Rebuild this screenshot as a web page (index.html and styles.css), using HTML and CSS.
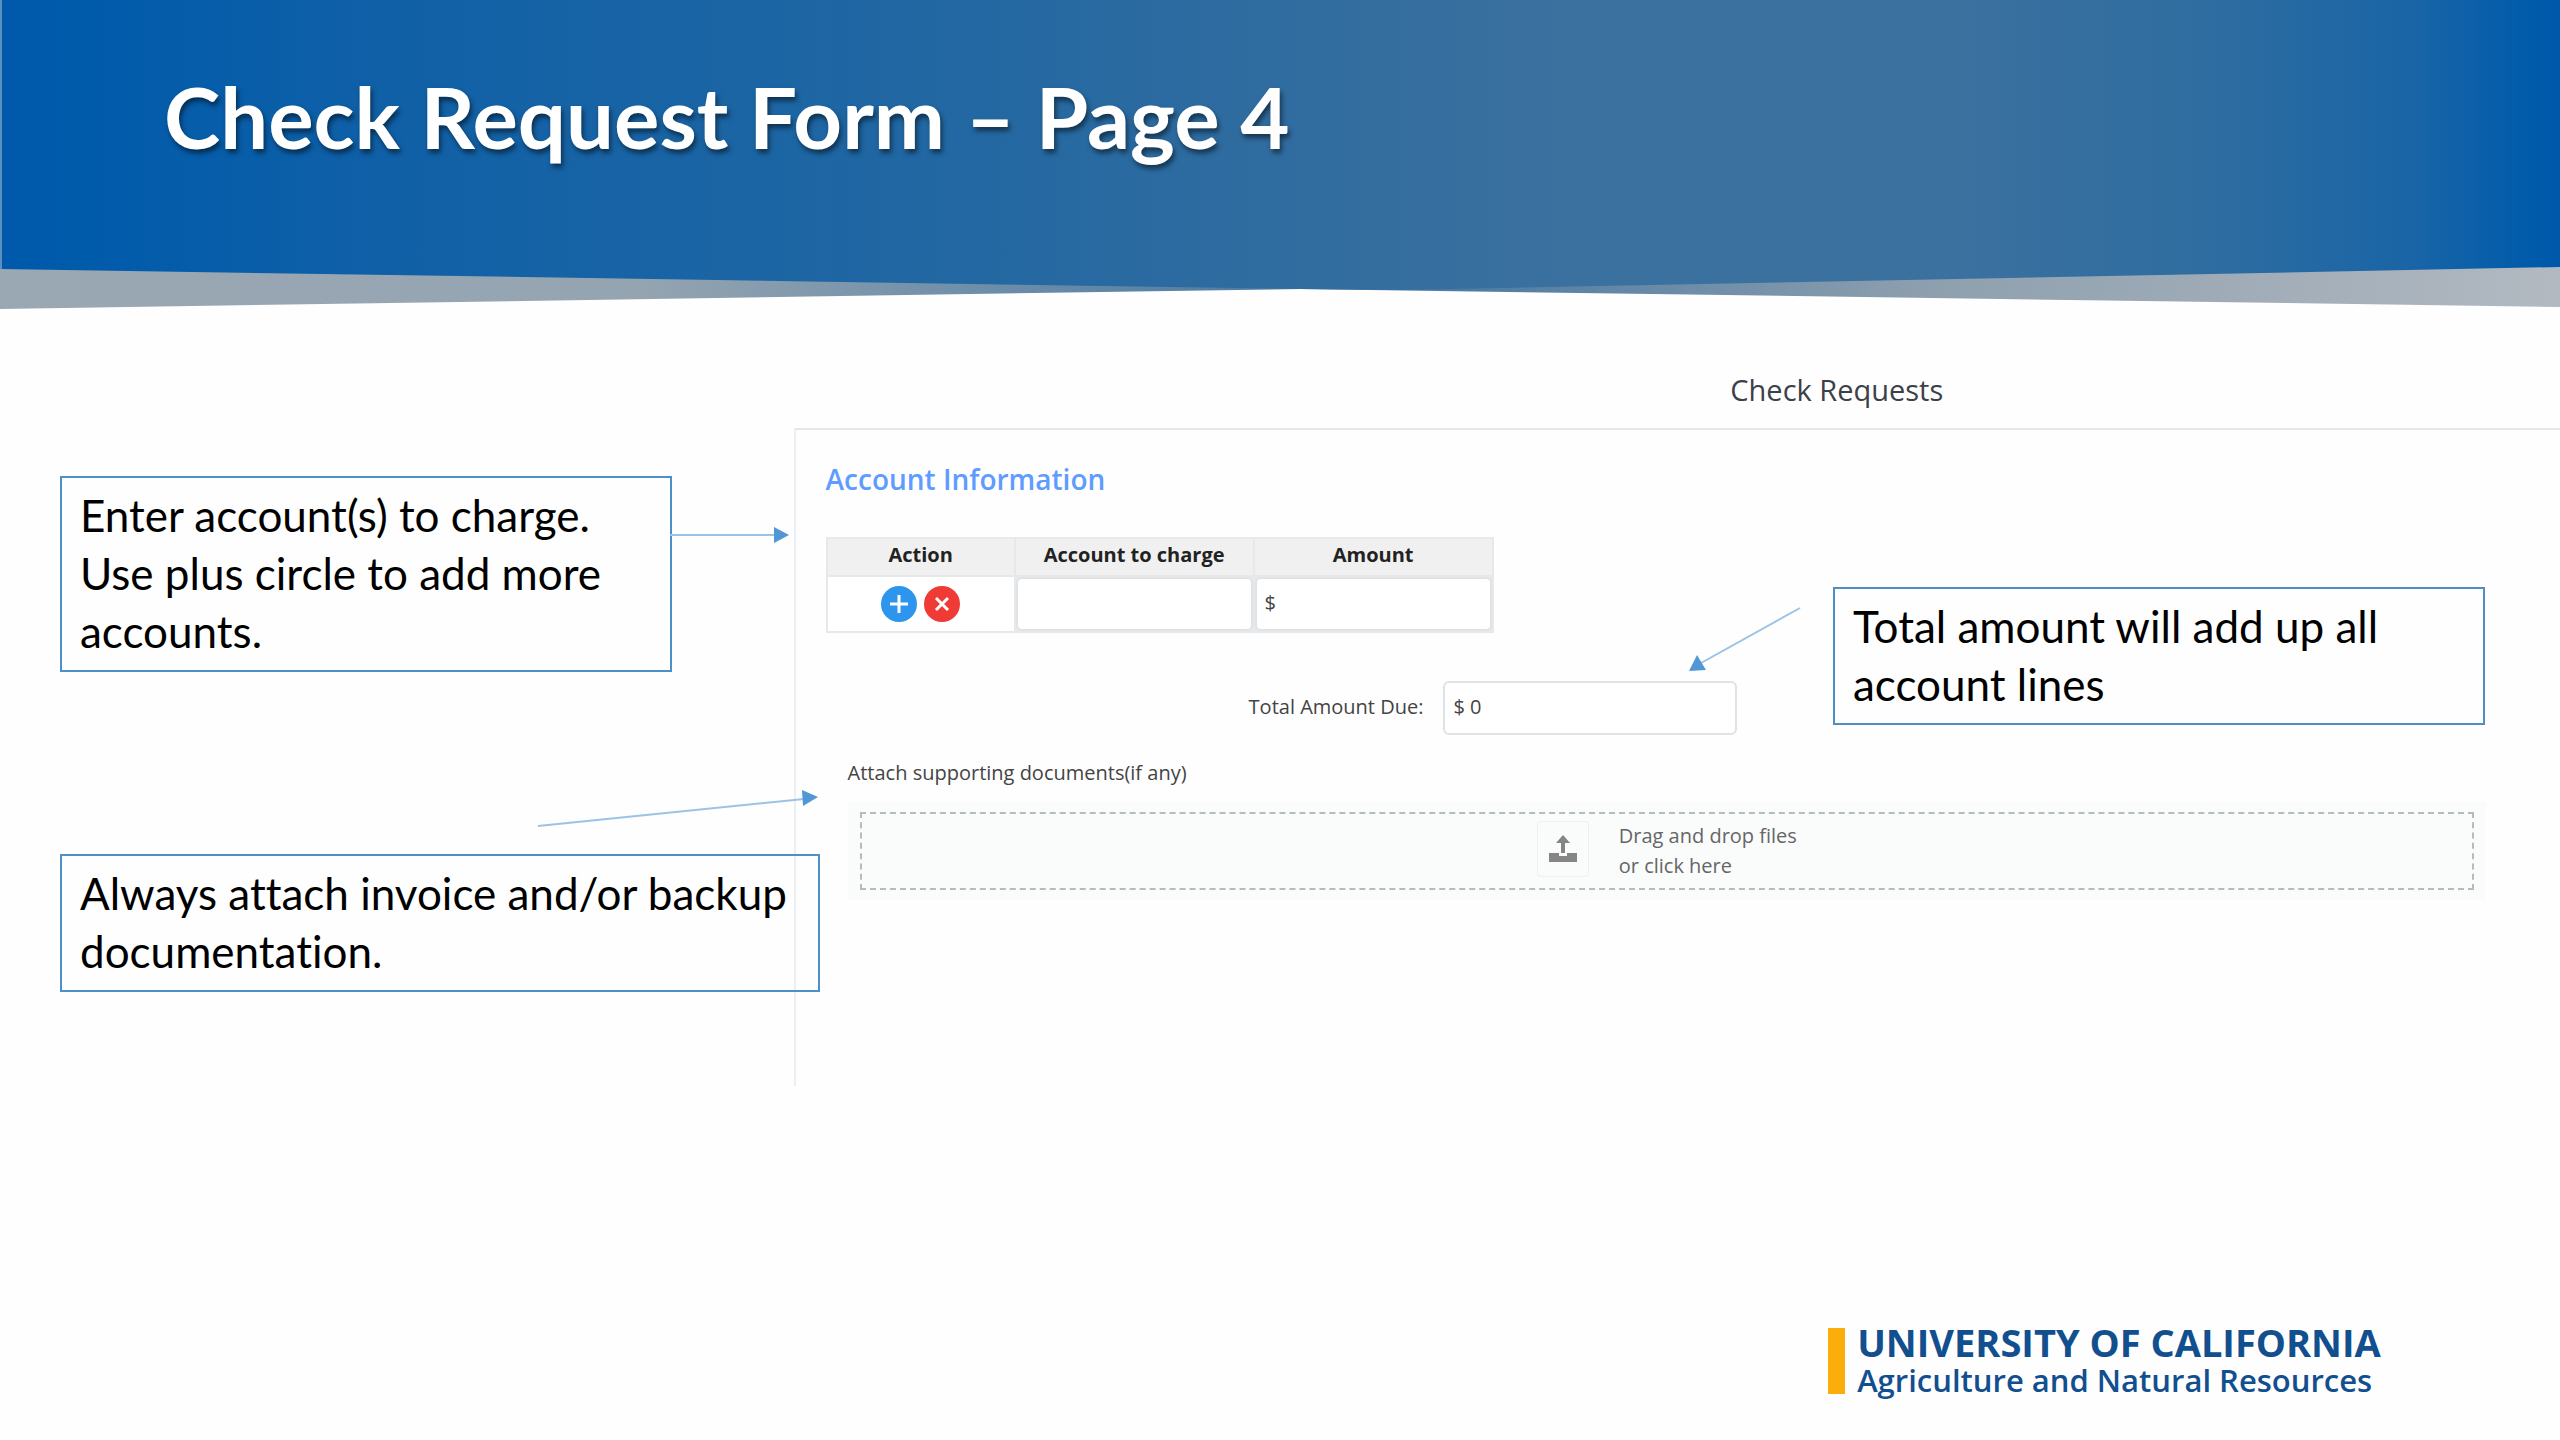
FILE: index.html
```
<!DOCTYPE html>
<html lang="en">
<head>
    <meta charset="UTF-8">
    <meta name="viewport" content="width=device-width, initial-scale=1.0">
    <title>Check Request Form – Page 4</title>
    <link rel="stylesheet" href="styles.css">
</head>
<body>
    <header class="banner">
        <svg class="banner-bg" viewBox="0 0 2560 310" preserveAspectRatio="none" aria-hidden="true">
            <defs>
                <linearGradient id="blue">
                    <stop offset="0" stop-color="#0059ab"/>
                    <stop offset="0.03" stop-color="#005bab"/>
                    <stop offset="0.15" stop-color="#1060a7"/>
                    <stop offset="0.35" stop-color="#2067a3"/>
                    <stop offset="0.52" stop-color="#326d9f"/>
                    <stop offset="0.62" stop-color="#3b719f"/>
                    <stop offset="0.76" stop-color="#3b719f"/>
                    <stop offset="0.86" stop-color="#2f6da0"/>
                    <stop offset="0.94" stop-color="#1a65a6"/>
                    <stop offset="0.99" stop-color="#005bab"/>
                    <stop offset="1" stop-color="#0058aa"/>
                </linearGradient>
                <linearGradient id="grey">
                    <stop offset="0" stop-color="#9aa8b3"/>
                    <stop offset="0.25" stop-color="#94a4b1"/>
                    <stop offset="0.5" stop-color="#4d7ba2"/>
                    <stop offset="0.57" stop-color="#4d7ba2"/>
                    <stop offset="0.75" stop-color="#8d9fae"/>
                    <stop offset="1" stop-color="#b2b9c1"/>
                </linearGradient>
            </defs>
            <path fill="url(#grey)" d="M0 260H2560V307L1300 289L0 309Z"/>
            <path fill="url(#blue)" d="M0 0H2560V267L1400 290L1300 289L0 269Z"/>
            <path fill="#5b8fc0" d="M0 0H2V269H0Z"/>
        </svg>
        <h1>Check Request Form – Page 4</h1>
    </header>

    <main class="slide">
        <aside class="notes">
            <div class="callout callout-accounts">
                Enter account(s) to charge.<br>Use plus circle to add more accounts.
                <svg class="arrow arrow-accounts" width="120" height="20" viewBox="0 0 120 20" aria-hidden="true">
                    <path class="line" d="M0 10H106"/>
                    <path class="head" d="M104 2L119 10L104 18Z"/>
                </svg>
            </div>
            <div class="callout callout-attach">
                Always attach invoice and/or backup documentation.
                <svg class="arrow arrow-attach" width="284" height="46" viewBox="0 0 284 46" aria-hidden="true">
                    <path class="line" d="M2 38L268 11"/>
                    <path class="head" d="M266 2L282 9L267 18Z"/>
                </svg>
            </div>
        </aside>

        <section class="request">
            <h2>Check Requests</h2>
            <form class="panel">
                <h3>Account Information</h3>
                <table class="accounts">
                    <thead>
                        <tr>
                            <th class="col-action">Action</th>
                            <th>Account to charge</th>
                            <th>Amount</th>
                        </tr>
                    </thead>
                    <tbody>
                        <tr>
                            <td class="actions">
                                <button type="button" class="add" aria-label="Add account">
                                    <svg viewBox="0 0 36 36"><path d="M18 9V27M9 18H27"/></svg>
                                </button>
                                <button type="button" class="remove" aria-label="Remove account">
                                    <svg viewBox="0 0 36 36"><path d="M12 12L24 24M24 12L12 24"/></svg>
                                </button>
                            </td>
                            <td><input type="text" aria-label="Account to charge"></td>
                            <td><input type="text" aria-label="Amount" value="$"></td>
                        </tr>
                    </tbody>
                </table>

                <div class="total">
                    <label for="total">Total Amount Due:</label>
                    <input type="text" id="total" value="$ 0">
                </div>

                <div class="attach">
                    <label for="files">Attach supporting documents(if any)</label>
                    <div class="drop-outer">
                        <div class="drop">
                            <button type="button" class="upload" id="files">
                                <svg viewBox="0 0 30 30" aria-hidden="true">
                                    <path d="M15 1L22 9H17V19H13V9H8Z"/>
                                    <path d="M1 19H11V22H19V19H29V28H1Z"/>
                                </svg>
                            </button>
                            <div class="drop-text">
                                <div>Drag and drop files</div>
                                <div>or click here</div>
                            </div>
                        </div>
                    </div>
                </div>
            </form>

            <div class="callout callout-total">
                Total amount will add up all account lines
                <svg class="arrow arrow-total" width="116" height="70" viewBox="0 0 116 70" aria-hidden="true">
                    <path class="line" d="M113 3L14 58"/>
                    <path class="head" d="M2 66L10 50L19 65Z"/>
                </svg>
            </div>
        </section>
    </main>

    <footer class="footer">
        <div class="logo">
            <strong>UNIVERSITY OF CALIFORNIA</strong>
            <span>Agriculture and Natural Resources</span>
        </div>
    </footer>
</body>
</html>
```
FILE: styles.css
```
* {
    box-sizing: border-box;
}
body {
    margin: 0;
    min-height: 100vh;
    display: flex;
    flex-direction: column;
    background: #fefefe;
    color: #444;
    font-family: "Open Sans", "Noto Sans", sans-serif;
    font-size: 20px;
    font-variant-ligatures: none;
}
h1, h2, h3 {
    margin: 0;
}

/* banner */
.banner {
    position: relative;
    height: 310px;
    padding: 64px 6% 0 164px;
}
.banner-bg {
    position: absolute;
    inset: 0;
    width: 100%;
    height: 100%;
}
.banner h1 {
    position: relative;
    color: #fff;
    font-family: Lato, sans-serif;
    font-size: 85px;
    line-height: 104px;
    text-shadow: 2px 4px 5px rgba(0, 0, 0, 0.5);
}

/* slide body */
.slide {
    flex: 1;
    display: grid;
    grid-template-columns: 31% 1fr;
    align-items: start;
}
.notes {
    position: relative;
    z-index: 1;
    padding: 166px 0 0 60px;
}
.callout {
    position: relative;
    border: 2px solid #4f8fc9;
    padding: 8px 18px 10px;
    color: #000;
    font-family: Lato, sans-serif;
    font-size: 44px;
    line-height: 58px;
}
.callout-accounts {
    width: 612px;
    min-height: 196px;
}
.callout-attach {
    width: 760px;
    margin-top: 182px;
}
.callout-total {
    position: absolute;
    top: 277px;
    right: 75px;
    width: 652px;
}

/* arrows */
.arrow {
    position: absolute;
}
.arrow .line {
    fill: none;
    stroke: #9cc3e6;
    stroke-width: 2;
}
.arrow .head {
    fill: #5197d5;
}
.arrow-accounts {
    left: 100%;
    top: 47px;
}
.arrow-attach {
    right: -2px;
    top: -68px;
}
.arrow-total {
    right: calc(100% + 32px);
    top: 16px;
}

/* request form */
.request {
    position: relative;
}
.request h2 {
    height: 118px;
    padding: 61px 0 0 320px;
    color: #3c4048;
    font-size: 29px;
    font-weight: 500;
    line-height: 38px;
    text-align: center;
}
.panel {
    min-height: 658px;
    padding: 31px 74px 0 30px;
    border-top: 2px solid #e4e6e8;
    border-left: 2px solid #eceff2;
}
.panel h3 {
    color: #5e9cff;
    font-size: 28px;
    font-weight: 600;
    line-height: 36px;
}
.accounts {
    width: 668px;
    margin-top: 40px;
    border-collapse: collapse;
    table-layout: fixed;
}
.accounts th {
    height: 38px;
    padding: 0 0 5px;
    border: 2px solid #e6e8e9;
    background: #f0f0f0;
    color: #222;
    font-size: 20px;
    font-weight: 700;
    line-height: 30px;
}
.accounts .col-action {
    width: 188px;
}
.accounts td {
    height: 56px;
    padding: 0;
    border: 2px solid #e6e8e9;
    background: #e6e8ea;
}
.accounts .actions {
    background: #fff;
    text-align: center;
}
input {
    padding: 0 8px 4px;
    border: 2px solid #dfe3e6;
    border-radius: 6px;
    background: #fff;
    color: #444;
    font: inherit;
}
.accounts input {
    display: block;
    width: 100%;
    height: 54px;
}
.actions button {
    width: 36px;
    height: 36px;
    margin: 0 1px;
    padding: 0;
    border: 0;
    border-radius: 50%;
    vertical-align: middle;
}
.actions svg {
    display: block;
    fill: none;
    stroke: #fff;
    stroke-width: 3;
}
.actions .add {
    background: #2e95ee;
}
.actions .remove {
    background: #f03a35;
}
.total {
    display: flex;
    align-items: center;
    gap: 20px;
    margin: 48px 0 0 423px;
    line-height: 32px;
}
.total label {
    padding-bottom: 2px;
}
.total input {
    width: 294px;
    height: 54px;
}
.attach {
    margin: 22px 0 0 22px;
}
.attach label {
    display: block;
    line-height: 32px;
}
.drop-outer {
    margin-top: 13px;
    padding: 10px 12px;
    background: #fafbfb;
}
.drop {
    display: flex;
    justify-content: center;
    align-items: center;
    gap: 30px;
    height: 78px;
    border: 2px dashed #b3bdb9;
}
.drop-text {
    color: #666;
    line-height: 30px;
}
.upload {
    margin-bottom: 4px;
    padding: 12px 10px;
    border: 1px solid #efefef;
    border-radius: 4px;
    background: none;
}
.upload svg {
    display: block;
    width: 30px;
    height: 30px;
    fill: #858585;
}

/* footer logo */
.footer {
    display: flex;
    justify-content: flex-end;
    padding: 0 7% 41px 0;
}
.logo {
    position: relative;
    display: flex;
    flex-direction: column;
    padding-left: 29px;
    color: #124f8f;
    white-space: nowrap;
}
.logo::before {
    content: "";
    position: absolute;
    left: 0;
    top: 5px;
    bottom: 5px;
    width: 17px;
    background: #fbae0b;
}
.logo strong {
    font-size: 38px;
    line-height: 38px;
}
.logo span {
    font-size: 31px;
    font-weight: 600;
    line-height: 38px;
}
```
